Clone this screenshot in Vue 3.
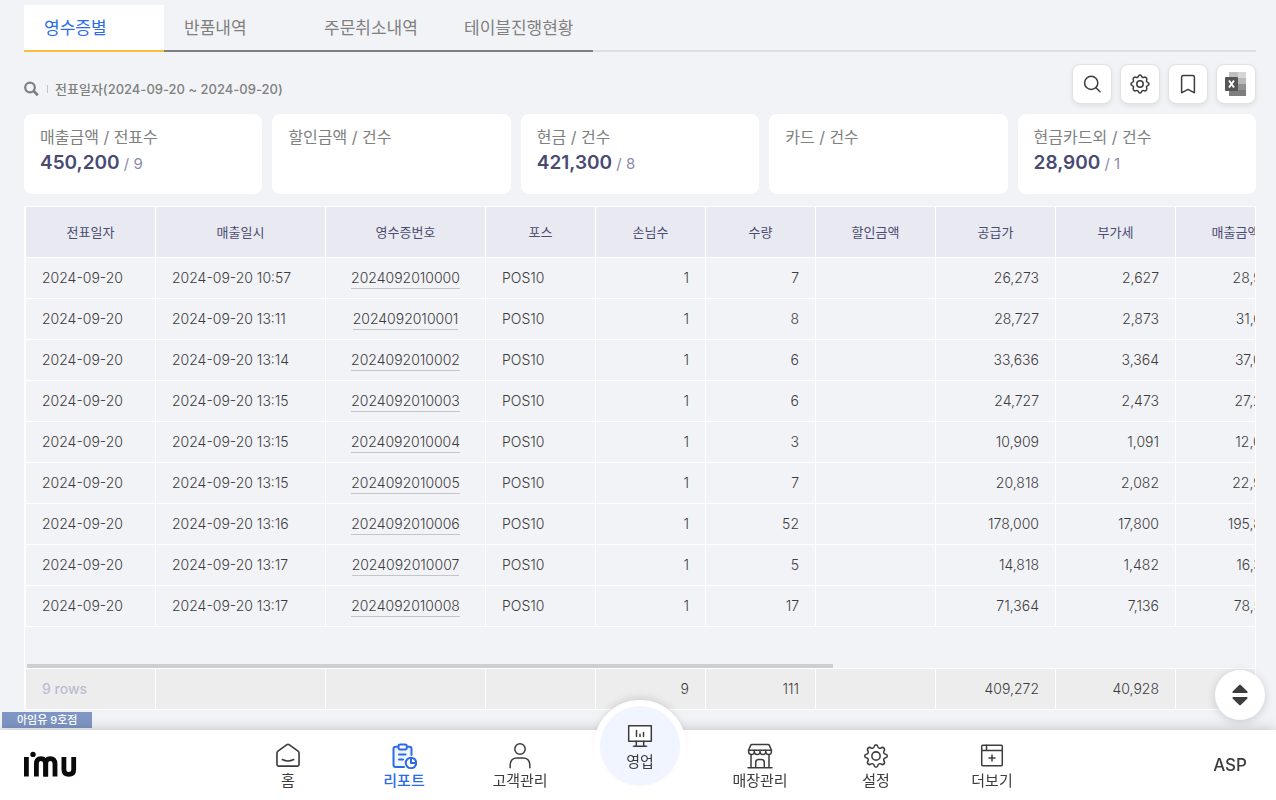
<script setup>
import { ref } from 'vue'

const tabs = ['영수증별', '반품내역', '주문취소내역', '테이블진행현황']
const activeTab = ref(0)

const cards = [
  { label: '매출금액 / 전표수', amount: '450,200', count: '9' },
  { label: '할인금액 / 건수' },
  { label: '현금 / 건수', amount: '421,300', count: '8' },
  { label: '카드 / 건수' },
  { label: '현금카드외 / 건수', amount: '28,900', count: '1' },
]

const columns = [
  { title: '전표일자', width: 131, align: 'left' },
  { title: '매출일시', width: 170, align: 'left' },
  { title: '영수증번호', width: 160, align: 'center' },
  { title: '포스', width: 110, align: 'left' },
  { title: '손님수', width: 110, align: 'right' },
  { title: '수량', width: 110, align: 'right' },
  { title: '할인금액', width: 120, align: 'right' },
  { title: '공급가', width: 120, align: 'right' },
  { title: '부가세', width: 120, align: 'right' },
  { title: '매출금액', width: 120, align: 'right' },
]

const rows = [
  ['10:57', '7', '26,273', '2,627', '28,900'],
  ['13:11', '8', '28,727', '2,873', '31,600'],
  ['13:14', '6', '33,636', '3,364', '37,000'],
  ['13:15', '6', '24,727', '2,473', '27,200'],
  ['13:15', '3', '10,909', '1,091', '12,000'],
  ['13:15', '7', '20,818', '2,082', '22,900'],
  ['13:16', '52', '178,000', '17,800', '195,800'],
  ['13:17', '5', '14,818', '1,482', '16,300'],
  ['13:17', '17', '71,364', '7,136', '78,500'],
].map(([time, qty, supply, vat, total], i) => [
  '2024-09-20',
  `2024-09-20 ${time}`,
  `202409201000${i}`,
  'POS10',
  '1',
  qty,
  '',
  supply,
  vat,
  total,
])

const totals = ['9 rows', '', '', '', '9', '111', '', '409,272', '40,928', '450,200']

const bodyScroller = ref(null)
const footScroller = ref(null)
function syncFoot() {
  footScroller.value.scrollLeft = bodyScroller.value.scrollLeft
}
</script>

<template>
  <div class="page">
    <main class="main">
      <nav class="tabs">
        <button
          v-for="(tab, i) in tabs"
          :key="tab"
          type="button"
          class="tab"
          :class="{ active: i === activeTab }"
          @click="activeTab = i"
        >{{ tab }}</button>
      </nav>

      <div class="toolbar">
        <p class="condition">
          <svg class="lens" viewBox="0 0 16 16" width="16" height="16" aria-hidden="true">
            <circle cx="6" cy="6.5" r="4.8" fill="none" stroke="#808080" stroke-width="2.2" />
            <path d="M9.6 10.1 13.8 14.3" stroke="#808080" stroke-width="2.8" />
          </svg>
          <span class="divider"></span>
          <span>전표일자(2024-09-20 ~ 2024-09-20)</span>
        </p>
        <div class="tools">
          <button type="button" class="tool" aria-label="검색">
            <svg viewBox="0 0 24 24" width="24" height="24" class="line">
              <circle cx="11.2" cy="10.9" r="6.6" />
              <path d="M16 15.8 20 19.8" />
            </svg>
          </button>
          <button type="button" class="tool" aria-label="설정">
            <svg viewBox="0 0 24 24" width="24" height="24" class="line">
              <path d="M10.4 4.3C10.8 2.6 13.2 2.6 13.6 4.3 13.9 5.3 15 5.8 16 5.3 17.5 4.4 19.6 6.5 18.7 8 18.2 9 18.7 10.1 19.7 10.4 21.4 10.8 21.4 13.2 19.7 13.6 18.7 13.9 18.2 15 18.7 16 19.6 17.5 17.5 19.6 16 18.7 15 18.2 13.9 18.7 13.6 19.7 13.2 21.4 10.8 21.4 10.4 19.7 10.1 18.7 9 18.2 8 18.7 6.5 19.6 4.4 17.5 5.3 16 5.8 15 5.3 13.9 4.3 13.6 2.6 13.2 2.6 10.8 4.3 10.4 5.3 10.1 5.8 9 5.3 8 4.4 6.5 6.5 4.4 8 5.3 9 5.8 10.1 5.3 10.4 4.3Z" />
              <circle cx="12" cy="12" r="3.2" />
            </svg>
          </button>
          <button type="button" class="tool" aria-label="즐겨찾기">
            <svg viewBox="0 0 24 24" width="24" height="24" class="line">
              <path d="M5.6 20.4V5.2Q5.6 3.5 7.3 3.5H16.7Q18.4 3.5 18.4 5.2V20.4Q18.4 20.8 18 20.6L12 17.4 6 20.6Q5.6 20.8 5.6 20.4Z" />
            </svg>
          </button>
          <button type="button" class="tool" aria-label="엑셀">
            <svg viewBox="0 0 24 24" width="24" height="24">
              <path d="M5 0H22V24H5Z" fill="#a8a8a8" />
              <path d="M5 0H14V7H5Z" fill="#c0c0c0" />
              <path d="M14 0H22V6H14Z" fill="#d6d6d6" />
              <path d="M14 6H22V12H14Z" fill="#b9b9b9" />
              <path d="M14 12H22V18H14Z" fill="#929292" />
              <path d="M5 18H22V24H5Z" fill="#7e7e7e" />
              <rect x="1" y="5" width="13" height="14" rx="1" fill="#555" />
              <path d="M5 8.5 10 15.5M10 8.5 5 15.5" stroke="#fff" stroke-width="1.9" />
            </svg>
          </button>
        </div>
      </div>

      <section class="cards">
        <article v-for="card in cards" :key="card.label" class="card">
          <h2>{{ card.label }}</h2>
          <p v-if="card.amount"><strong>{{ card.amount }}</strong> / {{ card.count }}</p>
        </article>
      </section>

      <section class="frame">
        <div ref="bodyScroller" class="scroller" @scroll="syncFoot">
          <table>
            <colgroup>
              <col v-for="col in columns" :key="col.title" :style="{ width: col.width + 'px' }" />
            </colgroup>
            <thead>
              <tr>
                <th v-for="col in columns" :key="col.title" scope="col">{{ col.title }}</th>
              </tr>
            </thead>
            <tbody>
              <tr v-for="row in rows" :key="row[2]">
                <td v-for="(cell, c) in row" :key="c" :class="columns[c].align">
                  <a v-if="c === 2" href="#">{{ cell }}</a>
                  <template v-else>{{ cell }}</template>
                </td>
              </tr>
            </tbody>
          </table>
        </div>
        <div class="track"><div class="thumb"></div></div>
        <div ref="footScroller" class="scroller">
          <table class="summary">
            <colgroup>
              <col v-for="col in columns" :key="col.title" :style="{ width: col.width + 'px' }" />
            </colgroup>
            <tbody>
              <tr>
                <td v-for="(cell, c) in totals" :key="c" :class="columns[c].align">{{ cell }}</td>
              </tr>
            </tbody>
          </table>
        </div>
      </section>

      <span class="shop">아임유 9호점</span>
    </main>

    <button type="button" class="updown" aria-label="위아래로 이동">
      <svg viewBox="0 0 24 24" width="24" height="24" fill="#3c3c3c">
        <path d="M11.2 2Q12 1.2 12.8 2L19.4 8.5Q20.2 10 18.8 10H5.2Q3.8 10 4.6 8.5Z" />
        <path d="M11.2 22Q12 22.8 12.8 22L19.4 15.5Q20.2 14 18.8 14H5.2Q3.8 14 4.6 15.5Z" />
      </svg>
    </button>

    <footer class="dock">
      <a href="#" class="logo" aria-label="imu">
        <svg viewBox="0 0 54 28" width="54" height="28" fill="none" stroke="#0a0a0a" stroke-width="4.8">
          <path d="M2.4 6V25.500" />
          <circle cx="9" cy="3.4" r="2.7" fill="#0a0a0a" stroke="none" />
          <path d="M12.4 25.5V13Q12.4 7.6 16.900 7.6T21.7 13V25.5" />
          <path d="M21.7 25.5V13Q21.7 7.6 26.3 7.6T31 13V25.5" />
          <path d="M39.9 6V18.5Q39.9 23.4 44.800 23.4T49.700 18.500V6" />
        </svg>
      </a>
      <nav class="menu">
        <a href="#" class="item">
          <svg viewBox="0 0 24 24" width="26" height="26" class="line">
            <path d="M1.8 9.3Q1.8 8.3 2.7 7.5L10.7 1.7Q12 .9 13.3 1.7L21.3 7.5Q22.2 8.3 22.2 9.3V19.8Q22.2 21.3 20.7 21.3H3.3Q1.8 21.3 1.8 19.8Z" />
            <path d="M6.8 15.3Q12 18 17.2 15.3" />
          </svg>
          <span>홈</span>
        </a>
        <a href="#" class="item current">
          <svg viewBox="0 0 26 26" width="26" height="26" class="line thick">
            <path fill="#f0f5ff" stroke="none" d="M2.500 4H20.500V14L14 24H2.500Z" />
            <path d="M7.5 3.8H4.7Q2.5 3.8 2.5 6V21.7Q2.5 23.9 4.7 23.9H13M16.8 3.8H18.5Q20.5 3.8 20.5 6V12" />
            <path fill="#fff" d="M9.2 1.5H14.2Q15.8 1.5 15.8 3.5V4.5Q15.8 6.5 14.2 6.5H9.2Q7.5 6.5 7.5 4.5V3.5Q7.5 1.5 9.2 1.5Z" />
            <path d="M8 11.5H14.5M8 16.5H12" />
            <circle cx="20" cy="20" r="5.2" fill="#fff" />
            <path d="M20 15V20H25" />
          </svg>
          <span>리포트</span>
        </a>
        <a href="#" class="item">
          <svg viewBox="0 0 26 26" width="26" height="26" class="line">
            <circle cx="13" cy="6" r="5.2" />
            <path d="M3.2 24.8V22.500Q3.2 15 10 15H16Q22.800 15 22.800 22.500V24.8" />
          </svg>
          <span>고객관리</span>
        </a>
        <a href="#" class="item sales">
          <span class="disc">
            <svg viewBox="0 0 26 26" width="26" height="26" class="line">
              <path fill="#fff" d="M1.7 1.700H24.3V17.300H1.7Z" />
              <path d="M9.3 17.3V22M16.7 17.3V22M6.5 22.2H19.5" />
              <path d="M9.5 6.5V12.5M13 10.3V12.5M16.5 8.5V12.5" />
            </svg>
            <span>영업</span>
          </span>
        </a>
        <a href="#" class="item">
          <svg viewBox="0 0 26 26" width="26" height="26" class="line">
            <path d="M5 1.5H21Q22 1.5 22.4 2.4L24.4 7.2H1.6L3.6 2.4Q4 1.5 5 1.5Z" />
            <path d="M1.6 7.2V8.5Q1.6 11.5 4.5 11.5T7.3 8.5V7.2V8.5Q7.3 11.5 10.2 11.5T13 8.5V7.2V8.5Q13 11.5 15.9 11.5T18.7 8.5V7.2V8.5Q18.7 11.5 21.6 11.5T24.4 8.5V7.2" />
            <path d="M4 11.5V24.5M22 11.5V24.5M1 24.8H25M8.7 24.5V19.5Q8.7 16.5 11.7 16.5H14.3Q17.3 16.5 17.3 19.5V24.5" />
          </svg>
          <span>매장관리</span>
        </a>
        <a href="#" class="item">
          <svg viewBox="1 1 22 22" width="26" height="26" class="line gear">
            <path d="M10.4 4.3C10.8 1.8 13.2 1.8 13.6 4.3 13.9 5.3 15 5.8 16 5.3 18.1 3.8 20.2 5.9 18.7 8 18.2 9 18.7 10.1 19.7 10.4 22.2 10.8 22.2 13.2 19.7 13.6 18.7 13.9 18.2 15 18.7 16 20.2 18.1 18.1 20.2 16 18.7 15 18.2 13.9 18.7 13.6 19.7 13.2 22.2 10.8 22.2 10.4 19.7 10.1 18.7 9 18.2 8 18.7 5.9 20.2 3.8 18.1 5.3 16 5.8 15 5.3 13.9 4.3 13.6 1.8 13.2 1.8 10.8 4.3 10.4 5.3 10.1 5.8 9 5.3 8 3.8 5.9 5.9 3.8 8 5.3 9 5.8 10.1 5.3 10.4 4.3Z" />
            <circle cx="12" cy="12" r="3.5" />
          </svg>
          <span>설정</span>
        </a>
        <a href="#" class="item">
          <svg viewBox="0 0 26 26" width="26" height="26" class="line">
            <rect x="2.7" y="2.2" width="20.6" height="20.6" rx="1" />
            <path d="M2.7 7.500H23.3M7.5 2.2V7.500M13 12V18M10 15H16" />
          </svg>
          <span>더보기</span>
        </a>
      </nav>
      <span class="plan">ASP</span>
    </footer>
  </div>
</template>

<style>
html,
body {
  background: #f2f3f7;
}
</style>

<style scoped>
.page {
  display: flex;
  flex-direction: column;
  min-height: 100vh;
  background: #f2f3f7;
  color: #3c3c3c;
  font-family: Inter, "Noto Sans CJK KR", sans-serif;
}
.page * {
  box-sizing: border-box;
}
button {
  padding: 0;
  border: 0;
  font: inherit;
  cursor: pointer;
}
a {
  color: inherit;
  text-decoration: none;
}
.line {
  fill: none;
  stroke: currentColor;
  stroke-width: 1.5;
  stroke-linecap: round;
  stroke-linejoin: round;
}
.thick {
  stroke-width: 2;
}
.gear {
  stroke-width: 1.3;
}
.main {
  display: flex;
  flex: 1;
  flex-direction: column;
  padding: 5px 20px 2px 24px;
}
.tabs {
  display: flex;
  box-shadow: inset 0 -2px #dedfe1;
}
.tab {
  min-width: 140px;
  height: 47px;
  padding: 0 20px;
  border-bottom: 2px solid #808080;
  background: transparent;
  color: #808080;
  font-size: 17px;
  line-height: 24px;
  text-align: left;
}
.tab.active {
  border-color: #fbbc41;
  background: #fff;
  color: #2c6be8;
}
.toolbar {
  display: flex;
  align-items: center;
  justify-content: space-between;
  margin: 12px 0 10px;
}
.condition {
  display: flex;
  align-items: center;
  gap: 7px;
  margin: 9px 0 0;
  color: #808080;
  font-size: 13px;
  font-weight: 500;
  line-height: 20px;
}
.divider {
  width: 1px;
  height: 8px;
  background: #c4c5c9;
}
.tools {
  display: flex;
  gap: 8px;
}
.tool {
  display: grid;
  place-items: center;
  width: 40px;
  height: 40px;
  border: 1px solid #e3e3e3;
  border-radius: 8px;
  background: #fff;
  box-shadow: 0 2px 5px rgba(0, 0, 0, 0.08);
  color: #3c3c3c;
}
.cards {
  display: grid;
  grid-template-columns: repeat(5, 1fr);
  gap: 10px;
}
.card {
  height: 80px;
  padding: 11px 16px;
  border-radius: 8px;
  background: #fff;
}
.card h2 {
  margin: 0;
  color: #808080;
  font-size: 16px;
  font-weight: 400;
  line-height: 24px;
}
.card p {
  margin: 2px 0 0;
  color: #8a8bab;
  font-size: 15px;
  line-height: 24px;
}
.card strong {
  color: #494a72;
  font-size: 19px;
  font-weight: 600;
}
.frame {
  margin-top: 12px;
  border: solid #fff;
  border-width: 1px 1px 0;
}
.scroller {
  overflow-x: auto;
  overflow-y: hidden;
  scrollbar-width: none;
}
table {
  width: 1271px;
  border-spacing: 0;
  table-layout: fixed;
}
th,
td {
  height: 41px;
  padding: 0 16px;
  border: solid #fff;
  border-width: 0 1px 1px 0;
  font-size: 14px;
  font-weight: 300;
  line-height: 20px;
  white-space: nowrap;
}
th:first-child,
td:first-child {
  border-left-width: 1px;
}
th {
  height: 51px;
  background: #e9e9f1;
  color: #4b4c70;
  font-size: 13px;
  font-weight: 400;
}
.left {
  text-align: left;
}
.center {
  text-align: center;
}
.right {
  text-align: right;
}
td a {
  display: inline-block;
  border-bottom: 1px solid #c4c5c9;
}
.track {
  height: 42px;
  padding: 37px 0 0 2px;
  border-bottom: 1px solid #fff;
}
.thumb {
  width: 65.6%;
  height: 4px;
  background: #cdced0;
}
.summary td {
  background: #ededed;
}
.summary td:first-child {
  color: #bcbdd2;
  font-weight: 500;
}
.shop {
  align-self: flex-start;
  height: 16px;
  margin: 2px 0 0 -22px;
  padding: 0 15px;
  background: #7f96c5;
  color: #fff;
  font-size: 11px;
  font-weight: 500;
  line-height: 16px;
}
.updown {
  position: fixed;
  right: 11px;
  bottom: 80px;
  z-index: 2;
  display: grid;
  place-items: center;
  width: 50px;
  height: 50px;
  border-radius: 50%;
  background: #fff;
  box-shadow: 0 2px 10px rgba(0, 0, 0, 0.16);
}
.dock {
  position: sticky;
  bottom: 0;
  display: grid;
  grid-template-columns: 1fr auto 1fr;
  align-items: center;
  height: 70px;
  padding: 0 20px 0 24px;
  background: #fff;
  box-shadow: 0 0 12px rgba(0, 0, 0, 0.22);
}
.logo svg {
  display: block;
}
.menu {
  display: flex;
  height: 70px;
}
.item {
  display: flex;
  flex-direction: column;
  align-items: center;
  width: 116px;
  padding-top: 13px;
  font-size: 15px;
  line-height: 24px;
}
.item.current {
  color: #2c6be8;
  font-weight: 500;
}
.item.sales {
  width: 124px;
  margin-top: -30px;
  padding: 0;
}
.disc {
  display: flex;
  flex-direction: column;
  align-items: center;
  width: 92px;
  height: 92px;
  padding-top: 18px;
  border: 6px solid #fff;
  border-radius: 50%;
  background: #f0f5ff;
  box-shadow: 0 -6px 8px -4px rgba(0, 0, 0, 0.14);
}
.plan {
  justify-self: end;
  margin-right: 9px;
  font-size: 17px;
  font-weight: 500;
}
</style>
